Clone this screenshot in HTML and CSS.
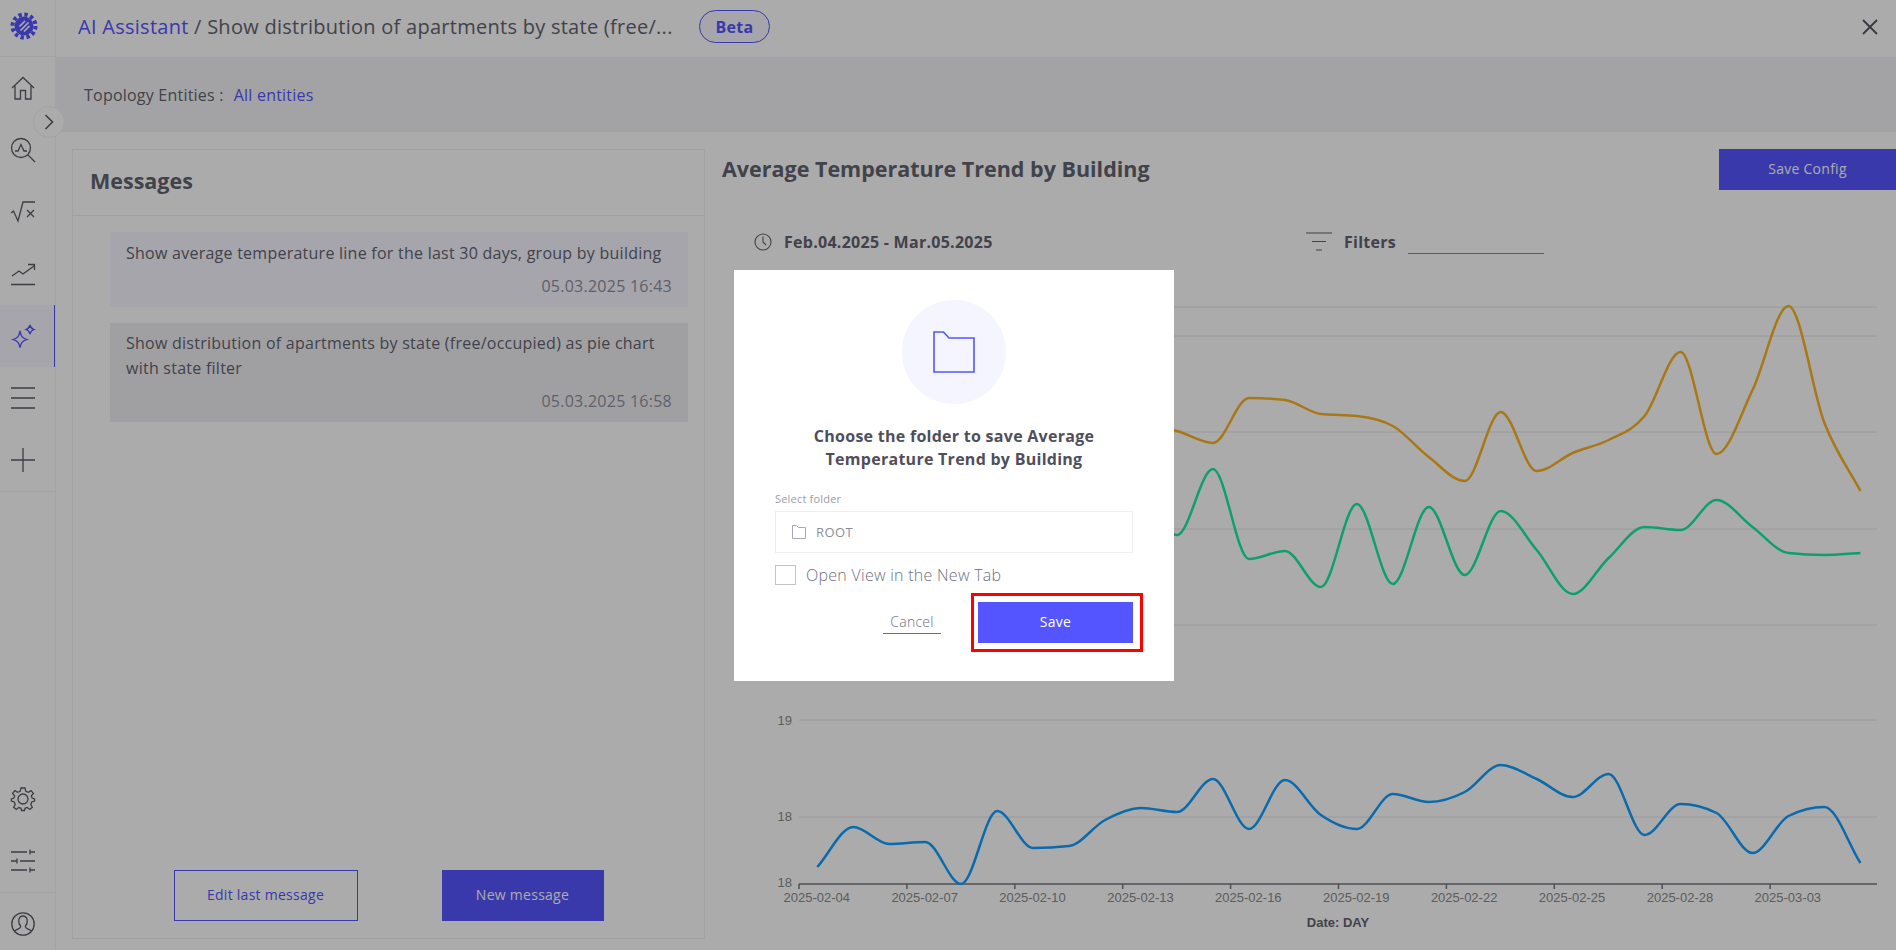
FILE: index.html
```html
<!DOCTYPE html>
<html lang="en">
<head>
  <meta charset="UTF-8" />
  <meta name="viewport" content="width=device-width, initial-scale=1" />
  <title>AI Assistant</title>
  <link rel="stylesheet" href="styles.css">
</head>
<body>
  <aside class="sidebar">
    <div class="logo">
      <svg width="28" height="28" viewBox="0 0 28 28">
        <circle cx="14" cy="14" r="11.5" fill="none" stroke="#5555ff" stroke-width="4" stroke-dasharray="3.4 2.62"/>
        <circle cx="14" cy="14" r="9.5" fill="#5555ff"/>
        <path d="M9.500 14.500 L15 9 M10.500 18.500 L18.500 10.500 M14 19.500 L19.500 14" stroke="#fff" stroke-width="1.700"/>
      </svg>
    </div>
    <nav class="nav">
      <a class="nav-item">
        <svg class="icon" viewBox="0 0 24 24"><path d="M1 12 L12 1.500 L23 12 M4 10 V23 H9.500 V14.500 H14.500 V23 H20 V10"/></svg>
      </a>
      <a class="nav-item">
        <svg class="icon" viewBox="0 0 24 24"><circle cx="10" cy="10" r="9.500"/><path d="M17 17 L24 24 M4 13 H7 L10 6.500 L13 13 H16"/></svg>
      </a>
      <a class="nav-item">
        <svg class="icon" viewBox="0 0 24 24"><path d="M0 13 L2.500 11 L7 21 L12 2 H24 M16 10 L23 17 M23 10 L16 17"/></svg>
      </a>
      <a class="nav-item">
        <svg class="icon" viewBox="0 0 24 24"><path d="M1 14 L8 9 L12 12 L23 4 M17 2.500 H23.500 V8 M0 22.500 H24"/></svg>
      </a>
      <a class="nav-item nav-active">
        <svg class="icon" viewBox="0 0 24 24"><path d="M9 7 C10 12 11 14 16 15.500 C11 17 10 19 9 23.500 C8 19 7 17 2 15.500 C7 14 8 12 9 7 Z M19 1 C19.500 3.500 20 4.500 23 5.500 C20 6.500 19.500 7.500 19 10 C18.500 7.500 18 6.500 15 5.500 C18 4.500 18.500 3.500 19 1 Z"/></svg>
      </a>
      <a class="nav-item">
        <svg class="icon" viewBox="0 0 24 24"><path d="M0 2 H24 M0 12 H24 M0 22 H24"/></svg>
      </a>
      <a class="nav-item">
        <svg class="icon" viewBox="0 0 24 24"><path d="M0 12 H24 M12 0 V24"/></svg>
      </a>
    </nav>
    <div class="nav-bottom">
      <a class="nav-item">
        <svg class="icon" viewBox="0 0 24 24"><circle cx="12" cy="12" r="5"/><path d="M10 1 H14 L14.800 4.300 L17.300 5.300 L20.100 3.600 L22.400 6.400 L20.300 8.900 L21.100 11 L23.600 12 L23.600 14 L20.700 15 L19.800 17.500 L21.300 20.300 L18.700 22.400 L16.200 20.500 L14 21.300 L13.500 23.500 H10.500 L10 21.300 L7.800 20.500 L5.300 22.400 L2.700 20.300 L4.200 17.500 L3.300 15 L0.400 14 L0.400 12 L2.900 11 L3.700 8.900 L1.600 6.400 L3.900 3.600 L6.700 5.300 L9.200 4.300 Z"/></svg>
      </a>
      <a class="nav-item">
        <svg class="icon" viewBox="0 0 24 24"><path d="M0 3 H16 M19 3 H24 M19 0.500 V5.500 M0 12 H6 M9 12 H24 M6 9.500 V14.500 M0 21 H16 M19 21 H24 M19 18.500 V23.500"/></svg>
      </a>
      <a class="nav-item nav-user">
        <svg class="icon" viewBox="0 0 24 24"><circle cx="12" cy="12" r="11.200"/><path d="M3.500 19.500 C5 17 9.500 17 9.800 14.500 C7.800 12 7.500 10 7.800 8 C8.300 5 10 4 12 4 C14 4 15.700 5 16.200 8 C16.500 10 16.200 12 14.200 14.500 C14.500 17 19 17 20.500 19.500"/></svg>
      </a>
    </div>
    <button class="collapse-btn">
      <svg width="10" height="16" viewBox="0 0 10 16"><path d="M1.500 1 L8.500 8 L1.500 15" fill="none" stroke="#55555f" stroke-width="1.500"/></svg>
    </button>
  </aside>

  <main class="main">
    <header class="topbar">
      <h1 class="page-title"><span class="link">AI Assistant</span> / Show distribution of apartments by state (free/...</h1>
      <span class="beta">Beta</span>
      <svg class="close" width="16" height="16" viewBox="0 0 16 16"><path d="M1 1 L15 15 M15 1 L1 15"/></svg>
    </header>

    <div class="filter-bar">
      <span>Topology Entities :</span>
      <span class="link">All entities</span>
    </div>

    <div class="content">
      <section class="messages">
        <h2 class="messages-title">Messages</h2>
        <div class="message-list">
          <div class="message">
            <p>Show average temperature line for the last 30 days, group by building</p>
            <div class="message-date">05.03.2025 16:43</div>
          </div>
          <div class="message message-selected">
            <p>Show distribution of apartments by state (free/occupied) as pie chart with state filter</p>
            <div class="message-date">05.03.2025 16:58</div>
          </div>
        </div>
        <div class="message-actions">
          <button class="btn btn-outline">Edit last message</button>
          <button class="btn btn-primary btn-new">New message</button>
        </div>
      </section>

      <section class="chart-panel">
        <div class="chart-head">
          <h2 class="chart-title">Average Temperature Trend by Building</h2>
          <button class="btn btn-primary btn-config">Save Config</button>
        </div>
        <div class="chart-tools">
          <div class="date-range">
            <svg class="tool-icon" width="18" height="18" viewBox="0 0 18 18"><circle cx="9" cy="9" r="8"/><path d="M9 3.500 V9 L12 12"/></svg>
            <span>Feb.04.2025 - Mar.05.2025</span>
          </div>
          <div class="filters">
            <svg class="tool-icon" width="26" height="20" viewBox="0 0 26 20"><path d="M0 1 H26 M6 9.500 H20 M10 18 H16"/></svg>
            <span>Filters</span>
            <div class="filter-input"></div>
          </div>
        </div>
        <svg class="chart" id="chart" viewBox="705 270 1191 680" width="1191" height="680">
          <g class="grid">
            <path d="M799 307 H1877 M799 336 H1877 M799 432 H1877 M799 529 H1877 M799 625 H1877 M799 720 H1877 M799 817 H1877"/>
          </g>
          <path class="axis" id="axis" d="M799 884 H1877"/>
          <g class="y-labels">
            <text x="792" y="725">19</text>
            <text x="792" y="821">18</text>
            <text x="792" y="887">18</text>
          </g>
          <g class="x-labels" id="xLabels"></g>
          <text class="x-title" x="1338" y="927">Date: DAY</text>
          <g id="lines"></g>
        </svg>
      </section>
    </div>
  </main>

  <div class="overlay">
    <div class="modal">
      <div class="modal-circle">
        <svg width="42" height="42" viewBox="0 0 42 42"><path d="M1 1 H10.500 L16 7 H41 V41 H1 Z" fill="none" stroke="#5555ff" stroke-width="1.600"/></svg>
      </div>
      <h3 class="modal-title">Choose the folder to save Average Temperature Trend by Building</h3>
      <label class="field-label">Select folder</label>
      <div class="select">
        <svg width="14" height="14" viewBox="0 0 14 14"><path d="M0.500 0.500 H4.500 L6.500 2.500 H13.500 V13.500 H0.500 Z" fill="none" stroke="#a8a8b8" stroke-width="1"/></svg>
        <span>ROOT</span>
      </div>
      <label class="check-row">
        <span class="checkbox"></span>
        <span>Open View in the New Tab</span>
      </label>
      <div class="modal-actions">
        <a class="cancel">Cancel</a>
        <div class="save-mark">
          <button class="btn btn-save">Save</button>
        </div>
      </div>
    </div>
  </div>

  <script src="chart.js"></script>
</body>
</html>
```

FILE: styles.css
```css
* {
  box-sizing: border-box;
}
html,
body {
  height: 100%;
}
body {
  margin: 0;
  display: flex;
  height: 950px;
  overflow: hidden;
  background: #fff;
  color: #63636f;
  font-family: "Open Sans", sans-serif;
  font-size: 16px;
  letter-spacing: 0.27px;
}
h1,
h2,
h3,
p {
  margin: 0;
}
.link {
  color: #5555ff;
}
.btn {
  padding: 0 0 2px;
  border: none;
  font-family: inherit;
  font-size: 14px;
  letter-spacing: inherit;
  cursor: pointer;
}
.btn-primary {
  background: #5555ff;
  color: #fff;
}
.btn-outline {
  background: #fff;
  color: #5555ff;
  border: 1.5px solid #5555ff;
}

/* sidebar */
.sidebar {
  position: relative;
  width: 56px;
  flex: none;
  display: flex;
  flex-direction: column;
  border-right: 1px solid #f3f3f3;
}
.logo {
  height: 57px;
  display: flex;
  align-items: center;
  justify-content: center;
  padding-right: 7px;
  padding-bottom: 5px;
  border-bottom: 1px solid #f3f3f3;
}
.nav {
  height: 435px;
  border-bottom: 1px solid #f3f3f3;
}
.nav-item {
  height: 62px;
  display: flex;
  align-items: center;
  justify-content: center;
  padding-right: 9px;
}
.nav-active {
  background: #f6f6ff;
  border-right: 1.500px solid #5555ff;
}
.nav-active .icon {
  stroke: #5555ff;
}
.nav-bottom {
  margin-top: auto;
}
.nav-user {
  height: 58px;
  padding-top: 4px;
  border-top: 1px solid #f3f3f3;
}
.icon {
  width: 24px;
  height: 24px;
  fill: none;
  stroke: #5a5a66;
  stroke-width: 1.300;
  overflow: visible;
}
.collapse-btn {
  position: absolute;
  left: 33px;
  top: 106px;
  width: 32px;
  height: 32px;
  padding: 0;
  background: #fff;
  border: 1px solid #f3f3f3;
  border-radius: 50%;
  display: flex;
  align-items: center;
  justify-content: center;
}

/* main */
.main {
  flex: 1;
  min-width: 0;
  display: flex;
  flex-direction: column;
}
.topbar {
  height: 57px;
  flex: none;
  display: flex;
  align-items: center;
  padding: 0 18px 4px 22px;
}
.page-title {
  width: 621px;
  font-size: 20px;
  font-weight: 400;
  white-space: nowrap;
  overflow: hidden;
}
.beta {
  height: 33px;
  width: 71px;
  display: flex;
  align-items: center;
  justify-content: center;
  border: 1.500px solid #5555ff;
  border-radius: 17px;
  background: #f6f6ff;
  color: #5555ff;
  font-weight: 700;
}
.close {
  margin-left: auto;
  fill: none;
  stroke: #55555f;
  stroke-width: 1.800;
}
.filter-bar {
  height: 75px;
  flex: none;
  display: flex;
  align-items: center;
  gap: 10px;
  padding: 0 0 0 28px;
  background: #f4f4f7;
  letter-spacing: 0.22px;
}
.content {
  flex: 1;
  min-height: 0;
  display: flex;
  padding-top: 17px;
}

/* messages */
.messages {
  width: 633px;
  height: 790px;
  flex: none;
  margin-left: 16px;
  display: flex;
  flex-direction: column;
  border: 1px solid #f1f1f1;
}
.messages-title {
  height: 66px;
  flex: none;
  padding: 14px 0 0 17px;
  border-bottom: 1px solid #f1f1f1;
  font-size: 21.500px;
  letter-spacing: 0;
  line-height: 34px;
  font-weight: 700;
}
.message-list {
  margin: 16px 16px 0 37px;
  display: flex;
  flex-direction: column;
  gap: 16px;
}
.message {
  height: 75px;
  padding: 9px 16px 0;
  background: #f6f6ff;
  line-height: 25px;
  letter-spacing: 0.25px;
}
.message-selected {
  height: 99px;
  padding-top: 8px;
  background: #efeff3;
}
.message-date {
  margin-top: 8px;
  text-align: right;
  color: #8f8f9c;
}
.message-actions {
  margin-top: auto;
  margin-bottom: 17px;
  display: flex;
  justify-content: center;
  gap: 84px;
}
.message-actions .btn {
  height: 51px;
}
.btn-outline {
  width: 184px;
}
.btn-new {
  width: 162px;
}

/* chart */
.chart-panel {
  flex: 1;
  min-width: 0;
}
.chart-head {
  height: 41px;
  display: flex;
  justify-content: space-between;
  padding-left: 17px;
}
.chart-title {
  font-size: 21.500px;
  letter-spacing: 0;
  line-height: 40px;
  font-weight: 700;
}
.btn-config {
  width: 177px;
  height: 41px;
}
.chart-tools {
  height: 24px;
  margin-top: 40px;
  display: flex;
  align-items: center;
  padding-left: 49px;
  font-weight: 700;
}
.date-range {
  width: 552px;
  display: flex;
  align-items: center;
  gap: 12px;
}
.filters {
  display: flex;
  align-items: center;
  gap: 12px;
}
.filter-input {
  width: 136px;
  height: 1px;
  margin-top: 22px;
  background: #8a8a94;
}
.tool-icon {
  fill: none;
  stroke: #63636f;
  stroke-width: 1.100;
}
.chart {
  display: block;
  margin-top: 16px;
}
.grid path {
  fill: none;
  stroke: #e6e6f0;
  stroke-width: 1;
}
.axis {
  fill: none;
  stroke: #777780;
  stroke-width: 1.500;
}
.y-labels text,
.x-labels text {
  font-family: "Liberation Sans", sans-serif;
  font-size: 13px;
  letter-spacing: 0;
  fill: #8a8a8e;
}
.y-labels text {
  text-anchor: end;
}
.x-title {
  font-family: "Liberation Sans", sans-serif;
  font-size: 13px;
  letter-spacing: 0;
  font-weight: 700;
  fill: #63636f;
  text-anchor: middle;
}
.series {
  fill: none;
  stroke-width: 2.500;
}

/* dialog */
.overlay {
  position: fixed;
  inset: 0;
  display: grid;
  place-items: center;
  padding-left: 12px;
  background: rgba(0, 0, 0, 0.33);
}
.modal {
  width: 440px;
  height: 411px;
  padding: 30px 41px 0;
  display: flex;
  flex-direction: column;
  background: #fff;
}
.modal-circle {
  width: 104px;
  height: 104px;
  margin: 0 auto;
  display: flex;
  align-items: center;
  justify-content: center;
  border-radius: 50%;
  background: #f5f5ff;
}
.modal-title {
  margin-top: 21px;
  font-size: 16px;
  line-height: 23px;
  font-weight: 700;
  text-align: center;
  color: #4f4f5c;
  padding: 0 20px;
}
.field-label {
  margin-top: 20px;
  font-size: 11px;
  line-height: 15px;
  letter-spacing: 0.2px;
  color: #9c9ca8;
}
.select {
  height: 42px;
  margin-top: 5px;
  display: flex;
  align-items: center;
  gap: 10px;
  padding-left: 16px;
  border: 1px solid #efefef;
  font-size: 13px;
  letter-spacing: 0.4px;
  color: #8d8d9b;
}
.check-row {
  margin-top: 11px;
  display: flex;
  align-items: center;
  gap: 10px;
  font-weight: 300;
  color: #6f6f80;
}
.checkbox {
  width: 21px;
  height: 20px;
  border: 1px solid #c4c4c8;
}
.modal-actions {
  margin: 7px -10px 0 0;
  display: flex;
  justify-content: flex-end;
  align-items: center;
  gap: 30px;
}
.cancel {
  width: 58px;
  margin-top: 2px;
  text-align: center;
  font-size: 14px;
  line-height: 20px;
  font-weight: 300;
  padding-bottom: 1px;
  border-bottom: 1px solid #6f6f80;
  color: #6f6f80;
}
.save-mark {
  padding: 6px 7px 6px 4px;
  border: 3px solid #ff0000;
}
.btn-save {
  display: block;
  width: 155px;
  height: 41px;
  background: #5555ff;
  color: #fff;
}
```

FILE: chart.js
```js
// one value per day, in chart pixels
var series = [
  { color: "#fbb423", ys: [400, 395, 405, 410, 398, 420, 415, 425, 412, 424, 431, 443, 398, 400, 414, 416, 426, 457, 481, 412, 471, 453, 440, 416, 352, 454, 390, 306, 423, 491] },
  { color: "#14efa0", ys: [520, 500, 540, 510, 550, 505, 560, 520, 545, 515, 535, 469, 559, 551, 587, 504, 584, 507, 575, 511, 550, 594, 558, 527, 530, 500, 527, 553, 555, 553] },
  { color: "#0f9fff", ys: [867, 827, 844, 842, 884, 811, 848, 846, 820, 808, 812, 779, 829, 780, 815, 829, 794, 802, 792, 765, 779, 797, 774, 835, 804, 813, 853, 816, 807, 863] }
];
var startX = 817.3;
var stepX = 35.97;
var svgNS = "http://www.w3.org/2000/svg";

// monotone cubic, flat at every peak and valley
function smoothPath(ys) {
  var slopes = ys.map(function (y, i) {
    if (i === 0 || i === ys.length - 1) return null;
    var s0 = (y - ys[i - 1]) / stepX;
    var s1 = (ys[i + 1] - y) / stepX;
    var sign = (s0 < 0 ? -1 : 1) + (s1 < 0 ? -1 : 1);
    return sign * Math.min(Math.abs(s0), Math.abs(s1), Math.abs(s0 + s1) / 4) || 0;
  });
  slopes[0] = (ys[1] - ys[0]) / stepX;
  slopes[ys.length - 1] = (ys[ys.length - 1] - ys[ys.length - 2]) / stepX;

  var d = "M" + startX + " " + ys[0];
  for (var i = 0; i < ys.length - 1; i++) {
    var x1 = startX + stepX * i;
    var x2 = x1 + stepX;
    d += " C" + (x1 + stepX / 3) + " " + (ys[i] + slopes[i] * stepX / 3);
    d += " " + (x2 - stepX / 3) + " " + (ys[i + 1] - slopes[i + 1] * stepX / 3);
    d += " " + x2 + " " + ys[i + 1];
  }
  return d;
}

var lines = document.getElementById("lines");
series.forEach(function (s) {
  var path = document.createElementNS(svgNS, "path");
  path.setAttribute("class", "series");
  path.setAttribute("stroke", s.color);
  path.setAttribute("d", smoothPath(s.ys));
  lines.appendChild(path);
});

var labels = ["2025-02-04", "2025-02-07", "2025-02-10", "2025-02-13", "2025-02-16", "2025-02-19", "2025-02-22", "2025-02-25", "2025-02-28", "2025-03-03"];
var xLabels = document.getElementById("xLabels");
var axisD = "M799 884 H1877";
labels.forEach(function (label, i) {
  var x = 799 + 107.9 * i;
  axisD += " M" + x + " 884 V889";
  var text = document.createElementNS(svgNS, "text");
  text.setAttribute("x", x - 15.5);
  text.setAttribute("y", 902);
  text.textContent = label;
  xLabels.appendChild(text);
});
document.getElementById("axis").setAttribute("d", axisD);
```
